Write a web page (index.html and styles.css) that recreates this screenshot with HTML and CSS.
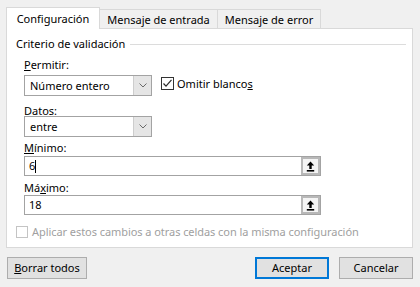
FILE: index.html
```html
<!DOCTYPE html>
<html lang="es">
<head>
<meta charset="utf-8">
<title>Validación de datos</title>
<link rel="stylesheet" href="styles.css">
</head>
<body>
<div class="dialog">
  <div class="tabs">
    <div class="tab active">Configuración</div>
    <div class="tab tab-entrada">Mensaje de entrada</div>
    <div class="tab tab-error">Mensaje de error</div>
  </div>
  <div class="panel">
    <div class="group-title"><span>Criterio de validación</span><div class="rule"></div></div>
    <div class="fields">
      <div class="label label-permitir"><u>P</u>ermitir:</div>
      <div class="select-row row-permitir">
        <div class="select">
          <span class="value">Número entero</span>
          <span class="drop"><svg width="8" height="5" viewBox="0 0 8 5"><polyline points="0.5,0.5 4,4 7.5,0.5" fill="none" stroke="#6a6a6a" stroke-width="1"/></svg></span>
        </div>
        <div class="check">
          <span class="box"><svg width="11" height="11" viewBox="0 0 11 11"><polyline points="1.5,5.5 4,8.2 9.5,1.8" fill="none" stroke="#2b2b2b" stroke-width="1.2"/></svg></span>
          <span>Omitir blanco<u>s</u></span>
        </div>
      </div>
      <div class="label label-datos"><u>D</u>atos:</div>
      <div class="select-row row-datos">
        <div class="select">
          <span class="value">entre</span>
          <span class="drop"><svg width="8" height="5" viewBox="0 0 8 5"><polyline points="0.5,0.5 4,4 7.5,0.5" fill="none" stroke="#6a6a6a" stroke-width="1"/></svg></span>
        </div>
      </div>
      <div class="label label-minimo"><u>M</u>ínimo:</div>
      <div class="input input-minimo">
        <span class="value">6<span class="caret"></span></span>
        <span class="ref"><svg width="9" height="11" viewBox="0 0 9 11"><polygon points="4.5,0.5 0.8,4.6 3.3,4.6 3.3,8 5.7,8 5.7,4.6 8.2,4.6" fill="#000"/><rect x="0.8" y="9" width="7.4" height="1.6" fill="#000"/></svg></span>
      </div>
      <div class="label label-maximo">Má<u>x</u>imo:</div>
      <div class="input input-maximo">
        <span class="value">18</span>
        <span class="ref"><svg width="9" height="11" viewBox="0 0 9 11"><polygon points="4.5,0.5 0.8,4.6 3.3,4.6 3.3,8 5.7,8 5.7,4.6 8.2,4.6" fill="#000"/><rect x="0.8" y="9" width="7.4" height="1.6" fill="#000"/></svg></span>
      </div>
    </div>
    <div class="apply">
      <span class="box disabled"></span>
      <span>Aplicar estos cambios a otras celdas con la misma configuración</span>
    </div>
  </div>
  <div class="buttons">
    <div class="btn btn-borrar"><u>B</u>orrar todos</div>
    <div class="btn-group">
      <div class="btn btn-default">Aceptar</div>
      <div class="btn">Cancelar</div>
    </div>
  </div>
</div>
</body>
</html>
```
FILE: styles.css
```css
* { box-sizing: border-box; }
html, body {
  margin: 0;
  background: #f0f0f0;
}
body {
  font-family: "Noto Sans", "Open Sans", sans-serif;
  font-size: 11px;
  color: #000;
}
u { text-decoration: underline; text-underline-offset: 1px; }

.dialog {
  width: 420px;
  height: 287px;
  padding: 7px 0 0 6px;
}

/* Tabs */
.tabs {
  display: flex;
  align-items: flex-end;
  height: 21px;
}
.tab {
  height: 19px;
  border: 1px solid #d9d9d9;
  border-left: none;
  border-bottom: none;
  background: #f0f0f0;
  text-align: center;
  padding-top: 1px;
  line-height: 17px;
  white-space: nowrap;
}
.tab.active {
  width: 94px;
  height: 22px;
  margin-bottom: -1px;
  border-left: 1px solid #d9d9d9;
  background: #fff;
  position: relative;
  z-index: 1;
  padding-top: 1px;
  line-height: 20px;
}
.tab-entrada { width: 118px; }
.tab-error { width: 103px; }

/* Panel */
.panel {
  width: 407px;
  height: 220px;
  border: 1px solid #d9d9d9;
  background: #fff;
}
.group-title {
  display: flex;
  align-items: center;
  height: 16px;
  line-height: 16px;
  margin: 7px 6px 0 9px;
  white-space: nowrap;
}
.group-title .rule {
  flex: 1;
  height: 1px;
  background: #dcdcdc;
  margin-left: 5px;
}
.fields {
  margin-left: 17px;
}
.label {
  height: 14px;
  line-height: 14px;
  white-space: nowrap;
}
.label-permitir { margin-top: 6px; }
.label-datos { margin-top: 8px; }
.label-minimo { margin-top: 4px; }
.label-maximo { margin-top: 5px; }

.select-row {
  display: flex;
  height: 21px;
}
.row-permitir { margin-top: 3px; }
.row-datos { margin-top: -2px; }

.select {
  width: 128px;
  height: 21px;
  border: 1px solid #a3a3a3;
  display: flex;
  background: #fff;
}
.select .value {
  flex: 1;
  padding-left: 5px;
  line-height: 19px;
  white-space: nowrap;
}
.select .drop {
  width: 18px;
  background: #e5e5e5;
  border-left: 1px solid #cdcdcd;
  display: flex;
  align-items: center;
  justify-content: center;
}

.check {
  display: flex;
  align-items: center;
  margin-left: 9px;
  margin-top: 2px;
  height: 13px;
  line-height: 13px;
  white-space: nowrap;
}
.box {
  width: 13px;
  height: 13px;
  border: 1px solid #333;
  background: #fff;
  margin-right: 3px;
  display: flex;
  align-items: center;
  justify-content: center;
}

.input {
  width: 297px;
  height: 20px;
  border: 1px solid #a3a3a3;
  display: flex;
  background: #fff;
}
.input-minimo { margin-top: 1px; }
.input .value {
  flex: 1;
  padding-left: 4px;
  line-height: 18px;
  display: flex;
  align-items: center;
}
.caret {
  display: inline-block;
  width: 1px;
  height: 13px;
  background: #000;
}
.input .ref {
  width: 19px;
  height: 18px;
  background: #f4f4f4;
  border: 2px solid #b8b8b8;
  display: flex;
  align-items: center;
  justify-content: center;
}

.apply {
  display: flex;
  align-items: center;
  margin: 10px 0 0 9px;
  height: 14px;
  line-height: 14px;
  color: #a0a0a0;
  white-space: nowrap;
  letter-spacing: -0.06px;
}
.box.disabled {
  width: 12px;
  height: 12px;
  border-color: #c4c4c4;
  margin-right: 4px;
}

/* Buttons */
.buttons {
  display: flex;
  justify-content: space-between;
  width: 406px;
  margin: 9px 0 0 1px;
}
.btn-group {
  display: flex;
  gap: 10px;
}
.btn {
  width: 74px;
  height: 22px;
  border: 1px solid #adadad;
  background: #e1e1e1;
  text-align: center;
  line-height: 20px;
  white-space: nowrap;
}
.btn-borrar { width: 80px; }
.btn-default {
  border: 2px solid #0078d7;
  line-height: 18px;
}
```
